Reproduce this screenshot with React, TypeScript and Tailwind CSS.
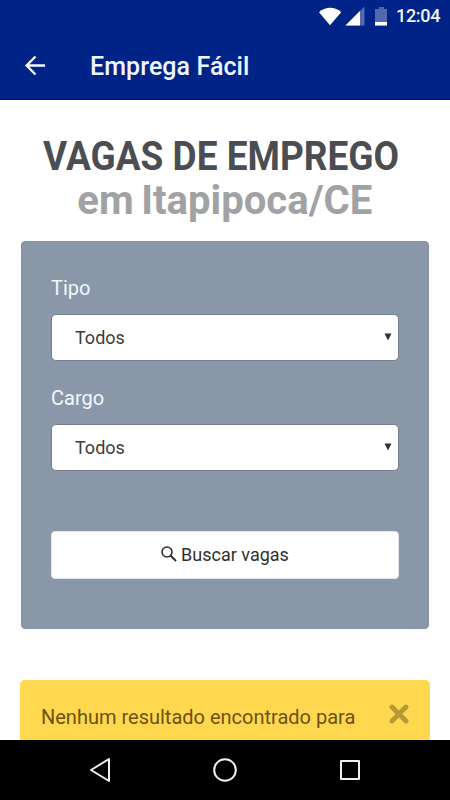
import React from "react";

function StatusBar() {
  return (
    <div className="flex h-8 items-center justify-end pr-[10px]">
      <svg width="72" height="20" viewBox="318 5 72 20" className="mr-[6px] block shrink-0">
        <path d="M319 11.3C325 5.2 335.500 5.200 341.200 11.300L330 24.200Z" fill="#fff" />
        <path d="M364.500 5.500V24.500H345.500Z" fill="#5469ac" />
        <path d="M360 10V24.500H345.500Z" fill="#fff" />
        <path d="M379 6h5v2h3v16.500h-12V8h4Z" fill="#5469ac" />
        <path d="M375 21h12v3.500h-12Z" fill="#fff" />
      </svg>
      <span className="w-[44px] text-[18px] leading-8 font-medium tracking-[-0.3px] whitespace-nowrap text-[#f0f4ff]">12:04</span>
    </div>
  );
}

function AppBar() {
  return (
    <div className="flex h-[67px] items-center pl-[24px] text-[#f0f6ff]">
      <svg width="22" height="22" viewBox="0 0 22 22" className="block" fill="none" stroke="currentColor" strokeWidth="2.400">
        <path d="M21 10.500H3M11.500 1.500L2.600 10.500L11.500 19.500" />
      </svg>
      <span className="mt-[2px] ml-[44px] text-[25px] font-medium tracking-[0.080px] whitespace-nowrap">Emprega Fácil</span>
    </div>
  );
}

function Field({ label }: { label: string }) {
  return (
    <div className="h-[110px]">
      <div className="h-[40px] text-[20px] leading-[28px] text-[#f4f8fc]">{label}</div>
      <div className="flex h-[47px] items-center justify-between rounded-[5px] border border-[#75808d] bg-white pr-[6px] pl-[23px] text-[18px] text-[#3c3c3c]">
        <span>Todos</span>
        <svg width="8" height="8" viewBox="0 0 8 8" className="mb-[1px] block"><path d="M0.500 0.500H7.500L4 7.500Z" fill="#333" /></svg>
      </div>
    </div>
  );
}

export default function App() {
  return (
    <div className="flex h-[800px] w-[450px] flex-col overflow-hidden bg-white font-['Roboto',sans-serif]">
      <header className="h-[100px] shrink-0 border-b border-[#001560] bg-[#002387]">
        <StatusBar />
        <AppBar />
      </header>
      <main className="flex h-[640px] shrink-0 flex-col overflow-hidden">
        <h1 className="mt-[34px] flex h-[107px] shrink-0 flex-col items-center text-[41px] leading-[44px] font-bold whitespace-nowrap">
          <span className="mr-[7px] block origin-center scale-x-[0.903] text-[#4a4e53]">VAGAS DE EMPREGO</span>
          <span className="block origin-center scale-x-[0.978] text-[#a1a2a3] [word-spacing:-2.5px]">em Itapipoca/CE</span>
        </h1>
        <section className="ml-[21px] h-[388px] w-[408px] shrink-0 rounded-[4px] border border-[#8493a6] bg-[#8997a9] px-[29px] pt-[32px]">
          <Field label="Tipo" />
          <Field label="Cargo" />
          <button className="mt-[37px] flex h-[48px] w-full items-center justify-center rounded-[4px] border border-[#dfe7f0] bg-white pb-[2px] text-[18px] text-[#303030]">
            <svg width="16" height="16" viewBox="0 0 16 16" fill="none" stroke="currentColor" strokeWidth="1.600" className="mr-[4px] block">
              <circle cx="6" cy="6" r="5" />
              <path d="M9.500 9.500L15 15" strokeWidth="2" />
            </svg>
            <span>Buscar vagas</span>
          </button>
        </section>
        <div className="mt-[51px] ml-[20px] flex h-[100px] w-[410px] shrink-0 items-start justify-between rounded-[5px] bg-[#ffd84f] pt-[23px] pr-[21px] pl-[21px] text-[#6c5210]">
          <span className="text-[20px] leading-[28px] whitespace-nowrap">Nenhum resultado encontrado para</span>
          <svg width="20" height="20" viewBox="0 0 20 20" className="mt-[1px] block" fill="none" stroke="#b49a39" strokeWidth="4.800" strokeLinecap="round">
            <path d="M3 3L17 17M17 3L3 17" />
          </svg>
        </div>
      </main>
      <nav className="flex h-[60px] shrink-0 items-center bg-black px-[88px]">
        <svg width="274" height="26" viewBox="88 757 274 26" className="block" fill="none" stroke="#f0f0f0" strokeWidth="2" strokeLinejoin="round">
          <path d="M109 759V781L91 770Z" />
          <circle cx="225" cy="770" r="10.800" />
          <rect x="341" y="761" width="18" height="18" />
        </svg>
      </nav>
    </div>
  );
}
